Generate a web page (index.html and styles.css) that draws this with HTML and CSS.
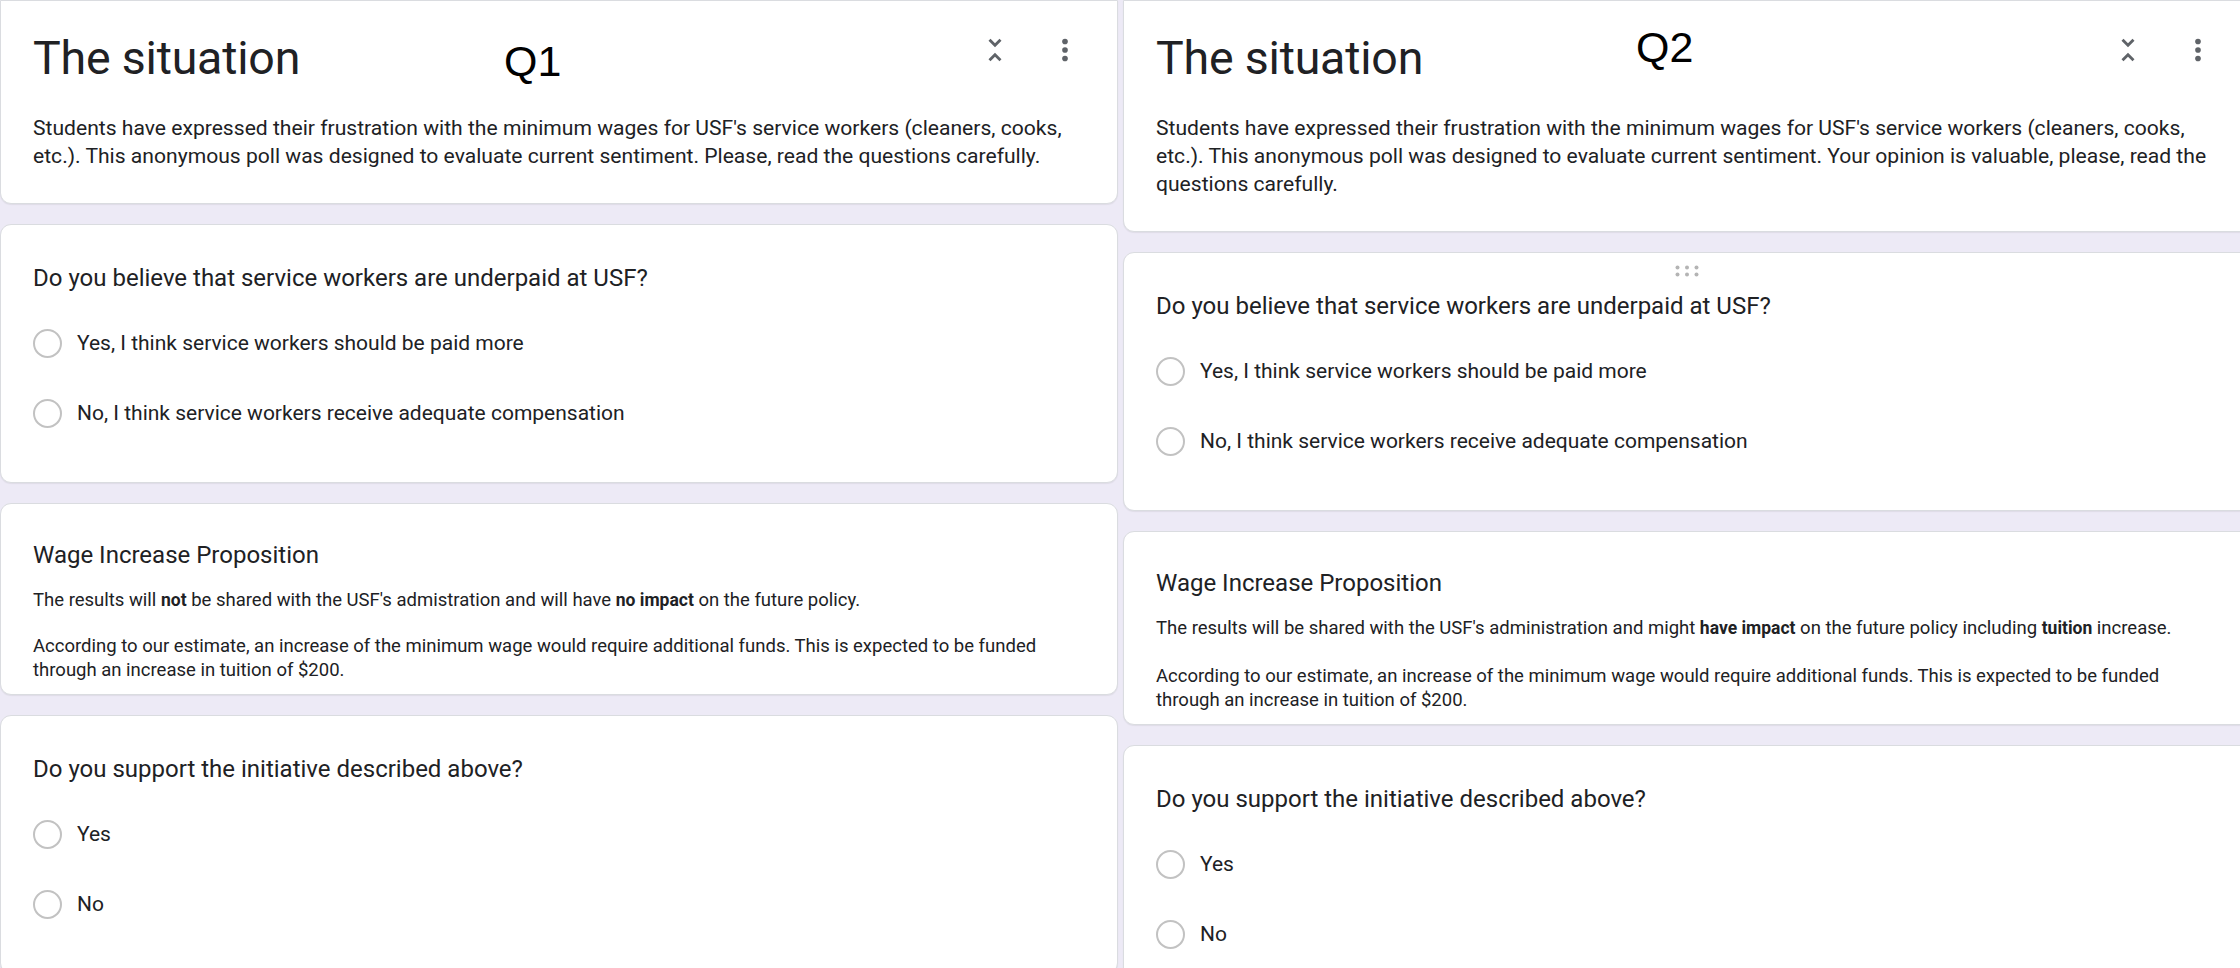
FILE: index.html
```html
<!DOCTYPE html>
<html lang="en">
<head>
<meta charset="utf-8">
<title>The situation – Q1 / Q2</title>
<link rel="stylesheet" href="styles.css">
</head>
<body>
<div class="page">
  <section class="panel panel-left">
    <div class="card header-card">
      <div class="header-row">
        <h1 class="form-title">The situation</h1>
        <div class="header-icons">
          <svg class="icon" viewBox="0 0 24 24" width="34" height="34"><path d="M7.41 18.59L8.83 20 12 16.83 15.17 20l1.41-1.41L12 14l-4.59 4.59zm9.18-13.18L15.17 4 12 7.17 8.83 4 7.41 5.41 12 10l4.59-4.59z"/></svg>
          <svg class="icon" viewBox="0 0 24 24" width="34" height="34"><circle cx="12" cy="6" r="2"/><circle cx="12" cy="12" r="2"/><circle cx="12" cy="18" r="2"/></svg>
        </div>
      </div>
      <p class="form-desc">Students have expressed their frustration with the minimum wages for USF's service workers (cleaners, cooks, etc.). This anonymous poll was designed to evaluate current sentiment. Please, read the questions carefully.</p>
      <span class="q-label q1">Q1</span>
    </div>

    <div class="card question-card">
      <h2 class="q-title">Do you believe that service workers are underpaid at USF?</h2>
      <div class="options">
        <div class="option"><span class="radio"></span><span class="opt-text">Yes, I think service workers should be paid more</span></div>
        <div class="option"><span class="radio"></span><span class="opt-text">No, I think service workers receive adequate compensation</span></div>
      </div>
    </div>

    <div class="card section-card">
      <h2 class="q-title">Wage Increase Proposition</h2>
      <p class="sec-desc">The results will <b>not</b> be shared with the USF's admistration and will have <b>no impact</b> on the future policy.</p>
      <p class="sec-desc sec-gap">According to our estimate, an increase of the minimum wage would require additional funds. This is expected to be funded through an increase in tuition of $200.</p>
    </div>

    <div class="card question-card">
      <h2 class="q-title">Do you support the initiative described above?</h2>
      <div class="options">
        <div class="option"><span class="radio"></span><span class="opt-text">Yes</span></div>
        <div class="option"><span class="radio"></span><span class="opt-text">No</span></div>
      </div>
    </div>
  </section>

  <section class="panel panel-right">
    <div class="card header-card">
      <div class="header-row">
        <h1 class="form-title">The situation</h1>
        <div class="header-icons">
          <svg class="icon" viewBox="0 0 24 24" width="34" height="34"><path d="M7.41 18.59L8.83 20 12 16.83 15.17 20l1.41-1.41L12 14l-4.59 4.59zm9.18-13.18L15.17 4 12 7.17 8.83 4 7.41 5.41 12 10l4.59-4.59z"/></svg>
          <svg class="icon" viewBox="0 0 24 24" width="34" height="34"><circle cx="12" cy="6" r="2"/><circle cx="12" cy="12" r="2"/><circle cx="12" cy="18" r="2"/></svg>
        </div>
      </div>
      <p class="form-desc">Students have expressed their frustration with the minimum wages for USF's service workers (cleaners, cooks, etc.). This anonymous poll was designed to evaluate current sentiment. Your opinion is valuable, please, read the questions carefully.</p>
      <span class="q-label q2">Q2</span>
    </div>

    <div class="card question-card">
      <svg class="drag-handle" viewBox="0 0 24 12" width="24" height="12"><circle cx="2.5" cy="2.5" r="2"/><circle cx="12" cy="2.5" r="2"/><circle cx="21.5" cy="2.5" r="2"/><circle cx="2.5" cy="9.5" r="2"/><circle cx="12" cy="9.5" r="2"/><circle cx="21.5" cy="9.5" r="2"/></svg>
      <h2 class="q-title">Do you believe that service workers are underpaid at USF?</h2>
      <div class="options">
        <div class="option"><span class="radio"></span><span class="opt-text">Yes, I think service workers should be paid more</span></div>
        <div class="option"><span class="radio"></span><span class="opt-text">No, I think service workers receive adequate compensation</span></div>
      </div>
    </div>

    <div class="card section-card">
      <h2 class="q-title">Wage Increase Proposition</h2>
      <p class="sec-desc">The results will be shared with the USF's administration and might <b>have impact</b> on the future policy including <b>tuition</b> increase.</p>
      <p class="sec-desc sec-gap">According to our estimate, an increase of the minimum wage would require additional funds. This is expected to be funded through an increase in tuition of $200.</p>
    </div>

    <div class="card question-card">
      <h2 class="q-title">Do you support the initiative described above?</h2>
      <div class="options">
        <div class="option"><span class="radio"></span><span class="opt-text">Yes</span></div>
        <div class="option"><span class="radio"></span><span class="opt-text">No</span></div>
      </div>
    </div>
  </section>
</div>
</body>
</html>
```

FILE: styles.css
```css
html, body {
  margin: 0;
  padding: 0;
}

body {
  background: #edeaf6;
  font-family: Roboto, "Noto Sans", "Liberation Sans", sans-serif;
  color: #202124;
  overflow: hidden;
  height: 968px;
}

.page {
  display: flex;
  gap: 5px;
  align-items: flex-start;
  width: 2240px;
}

.panel {
  display: flex;
  flex-direction: column;
  gap: 20px;
  flex: none;
}

.panel-left {
  width: 1118px;
}

.panel-right {
  width: 1128px;
}

.card {
  position: relative;
  background: #ffffff;
  border: 1px solid #dadce0;
  border-radius: 11px;
  padding: 0 33px 0 32px;
  box-shadow: 0 1px 1px rgba(60, 64, 67, 0.08);
}

/* header card */
.header-card {
  border-top-left-radius: 0;
  border-top-right-radius: 0;
  padding-top: 29px;
  padding-bottom: 33px;
  padding-right: 34px;
}

.header-row {
  display: flex;
  align-items: flex-start;
  justify-content: space-between;
}

.form-title {
  margin: 0;
  font-family: Roboto, "Open Sans", sans-serif;
  font-weight: 400;
  font-size: 46.5px;
  line-height: 56px;
  color: #202124;
  letter-spacing: -0.2px;
}

.header-icons {
  display: flex;
  gap: 36px;
  margin-top: 3px;
  margin-right: 1px;
}

.icon {
  display: block;
  fill: #5f6368;
}

.form-desc {
  margin: 28px -10px 0 0;
  font-size: 21.1px;
  line-height: 28px;
  color: #202124;
}

.q-label {
  position: absolute;
  font-family: "Liberation Sans", Arial, sans-serif;
  font-size: 43px;
  line-height: 43px;
  color: #000000;
}

.q1 {
  left: 503px;
  top: 39px;
}

.q2 {
  left: 512px;
  top: 25px;
}

/* question cards */
.question-card {
  padding-top: 37px;
  padding-bottom: 34px;
}

.q-title {
  margin: 0;
  font-family: Roboto, "Open Sans", sans-serif;
  font-weight: 400;
  font-size: 24px;
  line-height: 32px;
  color: #202124;
}

.options {
  margin-top: 14px;
  display: flex;
  flex-direction: column;
}

.option {
  height: 70px;
  display: flex;
  align-items: center;
  gap: 15px;
}

.radio {
  width: 29px;
  height: 29px;
  box-sizing: border-box;
  border: 2.8px solid #c2c2c2;
  border-radius: 50%;
  flex: none;
}

.opt-text {
  font-size: 21px;
  line-height: 28px;
  color: #202124;
}

.drag-handle {
  position: absolute;
  top: 12px;
  left: 50%;
  margin-left: -12px;
  fill: #b4b4b4;
}

/* section (title + description) */
.section-card {
  padding-top: 35px;
  padding-bottom: 12px;
}

.section-card .q-title {
  margin-bottom: 17px;
}

.sec-desc {
  margin: 0;
  font-size: 18.5px;
  line-height: 24px;
  color: #202124;
  max-width: 1050px;
}

.sec-gap {
  margin-top: 22px;
}

.panel-right .sec-gap {
  margin-top: 24px;
}

.sec-desc b {
  font-weight: 700;
  font-size: 17.5px;
}
```
